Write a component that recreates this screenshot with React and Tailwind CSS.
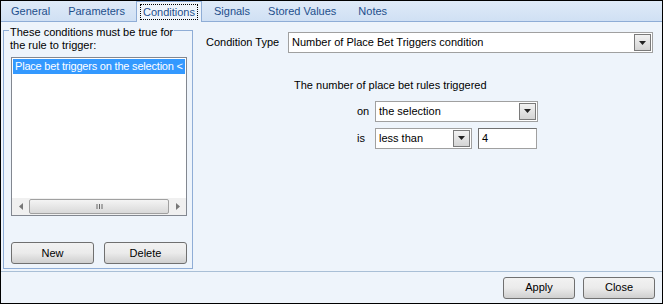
import React from "react";

function Arrow() {
  return (
    <div className="w-[17px] h-[17px] border border-[#7a7a7a] bg-gradient-to-b from-[#f2f2f2] to-[#d4d4d4] flex items-center justify-center">
      <svg width="7" height="4" viewBox="0 0 7 4">
        <path d="M0 0h7L3.5 4z" fill="#222" />
      </svg>
    </div>
  );
}

function Combo({ text, className }) {
  return (
    <div className={`h-[21px] border border-[#a0a0a0] bg-white flex items-center justify-between pl-[3px] pr-[1px] ${className}`}>
      <span>{text}</span>
      <Arrow />
    </div>
  );
}

function Button({ children, className }) {
  return (
    <div className={`h-[22px] border border-[#707070] rounded-[3px] bg-gradient-to-b from-[#f2f2f2] via-[#ebebeb] to-[#cfcfcf] flex items-center justify-center ${className}`}>
      {children}
    </div>
  );
}

export default function App() {
  const tabs = ["General", "Parameters", "Conditions", "Signals", "Stored Values", "Notes"];
  return (
    <div
      className="w-[663px] h-[304px] border border-black bg-[#eef4fb] flex flex-col text-[11px] text-black overflow-hidden"
      style={{ fontFamily: '"Liberation Sans", Arial, sans-serif' }}
    >
      {/* Tabs */}
      <div className="h-[21px] bg-gradient-to-b from-[#dfeaf8] to-[#d0e0f4] border-b border-[#8fadd6] flex items-end pl-[1px] shrink-0">
        {tabs.map((t) => (
          <div
            key={t}
            className={
              t === "Conditions"
                ? "h-[21px] -mb-px px-[3px] ml-[2px] mr-[3px] bg-[#eef4fb] border-x border-t border-[#8fadd6] flex items-center"
                : t === "Notes"
                ? "h-[20px] pl-[13px] pr-[9px] text-[#1e4f8c] flex items-center"
                : "h-[20px] px-[9px] text-[#1e4f8c] flex items-center"
            }
          >
            {t === "Conditions" ? (
              <span className="border border-dotted border-black px-[2px] text-[#1e4f8c] leading-[14px]">{t}</span>
            ) : (
              t
            )}
          </div>
        ))}
      </div>

      <div className="flex flex-1">
        {/* Left group */}
        <div className="w-[190px] ml-[2px] mt-[8px] h-[239px] border border-[#8fadd6] relative flex flex-col pl-[7px]">
          <div className="absolute -top-[5px] left-[5px] bg-[#eef4fb] px-[1px] leading-[13px]">
            These conditions must be true for
            <br />
            the rule to trigger:
          </div>
          <div className="mt-[26px] w-[176px] h-[159px] border border-[#828790] bg-white flex flex-col">
            <div className="bg-[#3399ff] text-white h-[15px] leading-[15px] pl-[2px] m-[1px] whitespace-nowrap overflow-hidden tracking-[-0.2px]">
              Place bet triggers on the selection &lt;
            </div>
            <div className="flex-1" />
            <div className="h-[17px] bg-[#f0f0f0] flex items-center">
              <div className="w-[17px] flex justify-center">
                <svg width="4" height="7" viewBox="0 0 4 7"><path d="M4 0v7L0 3.5z" fill="#777" /></svg>
              </div>
              <div className="flex-1 h-[15px] border border-[#a0a0a0] rounded-[2px] bg-gradient-to-b from-[#f4f4f4] to-[#d9d9d9] flex items-center justify-center">
                <svg width="7" height="7" viewBox="0 0 7 7"><path d="M1 1v5M3.5 1v5M6 1v5" stroke="#666" /></svg>
              </div>
              <div className="w-[17px] flex justify-center">
                <svg width="4" height="7" viewBox="0 0 4 7"><path d="M0 0v7L4 3.5z" fill="#777" /></svg>
              </div>
            </div>
          </div>
          <div className="mt-[26px] w-[176px] flex justify-between">
            <Button className="w-[83px]">New</Button>
            <Button className="w-[83px]">Delete</Button>
          </div>
        </div>

        {/* Right panel */}
        <div className="flex-1 flex flex-col">
          <div className="flex items-center mt-[10px] ml-[13px]">
            <span className="w-[82px]">Condition Type</span>
            <Combo text="Number of Place Bet Triggers condition" className="w-[365px]" />
          </div>
          <div className="ml-[101px] mt-[24px]">The number of place bet rules triggered</div>
          <div className="flex items-center mt-[7px] ml-[164px]">
            <span className="w-[18px]">on</span>
            <Combo text="the selection" className="w-[163px]" />
          </div>
          <div className="flex items-center mt-[6px] ml-[164px]">
            <span className="w-[18px]">is</span>
            <Combo text="less than" className="w-[97px]" />
            <div className="ml-[6px] w-[59px] h-[21px] border border-[#a0a0a0] border-t-[#707070] border-l-[#707070] bg-white pl-[3px] flex items-center">4</div>
          </div>
        </div>
      </div>

      {/* Footer */}
      <div className="h-[32px] border-t border-[#a9bfd6] flex items-center justify-end gap-[8px] pr-[7px] shrink-0">
        <Button className="w-[72px]">Apply</Button>
        <Button className="w-[72px]">Close</Button>
      </div>
    </div>
  );
}
